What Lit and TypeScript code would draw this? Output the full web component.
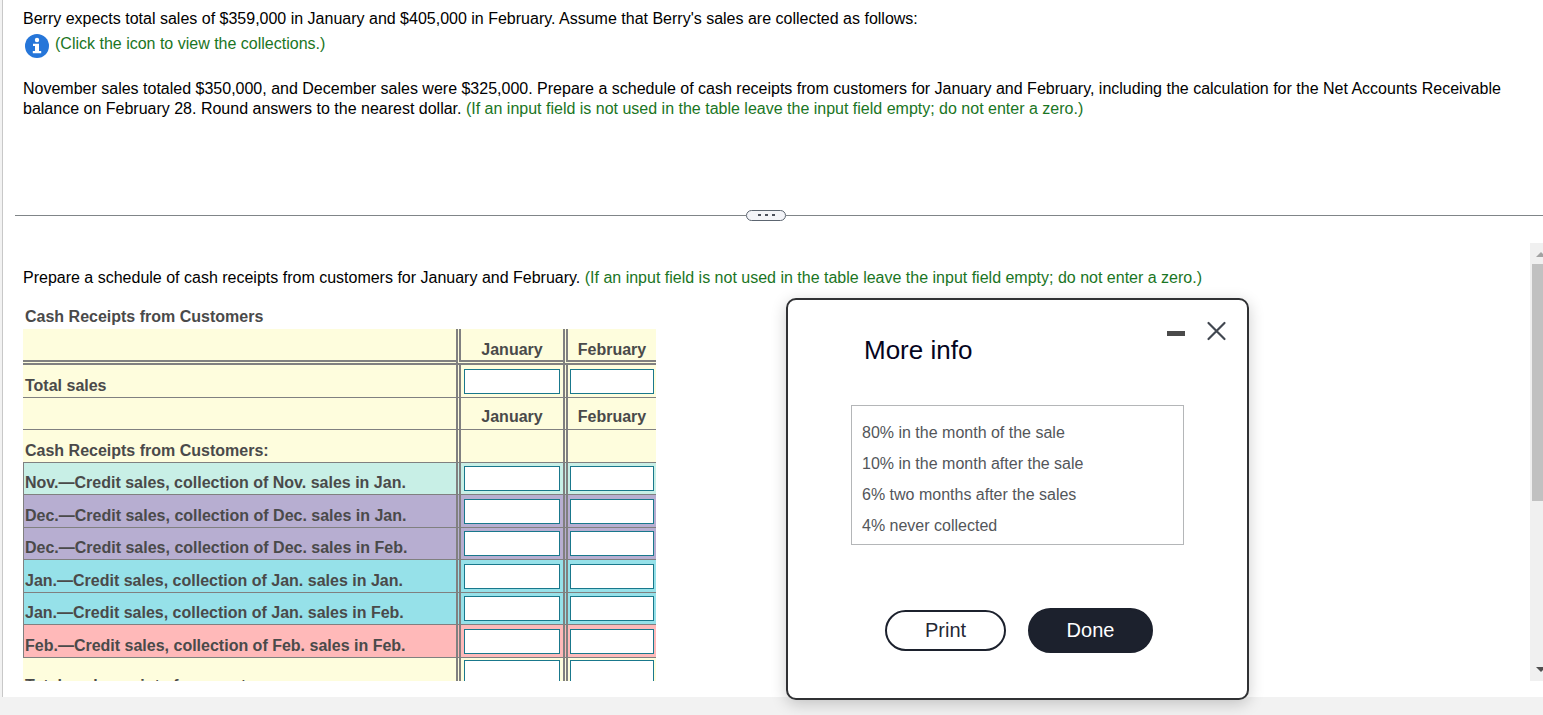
import { LitElement, html, css, svg, nothing } from "lit";
import { customElement } from "lit/decorators.js";
import { classMap } from "lit/directives/class-map.js";

type Row = { label: string; tone: string; kind: "input" | "heading" | "empty" };

const ROWS: Row[] = [
  { label: "Total sales", tone: "plain", kind: "input" },
  { label: "", tone: "plain", kind: "heading" },
  { label: "Cash Receipts from Customers:", tone: "plain", kind: "empty" },
  { label: "Nov.—Credit sales, collection of Nov. sales in Jan.", tone: "mint", kind: "input" },
  { label: "Dec.—Credit sales, collection of Dec. sales in Jan.", tone: "violet", kind: "input" },
  { label: "Dec.—Credit sales, collection of Dec. sales in Feb.", tone: "violet", kind: "input" },
  { label: "Jan.—Credit sales, collection of Jan. sales in Jan.", tone: "aqua", kind: "input" },
  { label: "Jan.—Credit sales, collection of Jan. sales in Feb.", tone: "aqua", kind: "input" },
  { label: "Feb.—Credit sales, collection of Feb. sales in Feb.", tone: "rose", kind: "input" },
  { label: "Total cash receipts from customers", tone: "plain", kind: "input" },
];

const MONTHS = ["January", "February"];

@customElement("receipts-table")
class ReceiptsTable extends LitElement {
  static styles = css`
    :host {
      display: block;
    }
    .grid {
      table-layout: fixed;
      width: 633px;
      border-collapse: separate;
      border-spacing: 0;
      font-weight: bold;
      color: #4a4a4a;
    }
    .name-col {
      width: 433px;
    }
    .jan-col {
      width: 107px;
    }
    .feb-col {
      width: 93px;
    }
    .caption {
      text-align: left;
      padding: 0 2px 2px;
    }
    th,
    td {
      box-sizing: border-box;
      padding: 0;
      border-bottom: 1px solid #808080;
    }
    .name {
      text-align: left;
      vertical-align: bottom;
      padding: 0 2px 1px;
      white-space: nowrap;
    }
    .month {
      border-left: 5px double #808080;
      text-align: center;
      vertical-align: bottom;
      padding-bottom: 2px;
    }
    .field {
      border-left: 5px double #808080;
      vertical-align: middle;
      padding: 0 3px;
    }
    .field + .field {
      padding: 0 2px;
    }
    .head {
      height: 36px;
    }
    .head th,
    .head td {
      border-bottom: 5px double #808080;
    }
    .head .month {
      padding-bottom: 0;
    }
    .row {
      height: 32px;
    }
    .row:nth-child(odd) {
      height: 33px;
    }
    .row:last-child {
      height: 40px;
    }
    .row:last-child .field {
      vertical-align: top;
      padding-top: 2px;
    }
    .plain {
      background: #fefddd;
    }
    .mint {
      background: #c8efe6;
    }
    .violet {
      background: #b7aed1;
    }
    .aqua {
      background: #96e1e9;
    }
    .rose {
      background: #ffb9b9;
    }
    .mint .name,
    .violet .name,
    .aqua .name,
    .rose .name {
      border-left: 1px solid #808080;
      padding-left: 1px;
    }
    input {
      display: block;
      box-sizing: border-box;
      width: 100%;
      height: 25px;
      margin: 0;
      padding: 0 4px;
      border: 1px solid #19788c;
      border-radius: 0;
      background: #fff;
      font: inherit;
      font-weight: normal;
      text-align: right;
    }
  `;

  private cells(row: Row) {
    return MONTHS.map((m) =>
      row.kind === "heading"
        ? html`<th class="month" scope="col">${m}</th>`
        : html`<td class="field">
            ${row.kind === "input"
              ? html`<input type="text" aria-label="${row.label}, ${m}" />`
              : nothing}
          </td>`
    );
  }

  render() {
    return html`
      <table class="grid">
        <caption class="caption">Cash Receipts from Customers</caption>
        <colgroup>
          <col class="name-col" />
          <col class="jan-col" />
          <col class="feb-col" />
        </colgroup>
        <thead>
          <tr class="head plain">
            <td class="name"></td>
            ${MONTHS.map((m) => html`<th class="month" scope="col">${m}</th>`)}
          </tr>
        </thead>
        <tbody>
          ${ROWS.map(
            (r) => html`<tr class=${classMap({ row: true, [r.tone]: true })}>
              <th class="name" scope="row">${r.label}</th>
              ${this.cells(r)}
            </tr>`
          )}
        </tbody>
      </table>
    `;
  }
}

@customElement("info-dialog")
class InfoDialog extends LitElement {
  static styles = css`
    :host {
      display: block;
    }
    .dialog {
      box-sizing: border-box;
      width: 463px;
      padding: 20px 20px 45px 63px;
      border: 2px solid #303134;
      border-radius: 10px;
      background: #fff;
      box-shadow: 0 4px 16px rgba(0, 0, 0, 0.2);
    }
    .top {
      display: flex;
      justify-content: space-between;
    }
    h2 {
      margin: 0;
      padding: 15px 0 0 13px;
      font-size: 26px;
      line-height: 30px;
      font-weight: normal;
      color: #05051e;
    }
    .tools {
      display: flex;
      align-items: flex-start;
      gap: 18px;
    }
    .tool {
      display: block;
      padding: 0;
      border: 0;
      background: none;
      width: 22px;
      height: 22px;
    }
    .tool svg {
      display: block;
    }
    .terms {
      list-style: none;
      margin: 40px 43px 0 0;
      padding: 11px 10px 3px;
      border: 1px solid #b4b6b8;
      color: #53565a;
    }
    .terms li {
      line-height: 31px;
    }
    .actions {
      display: flex;
      align-items: center;
      gap: 22px;
      padding: 63px 0 0 34px;
    }
    .pill {
      box-sizing: border-box;
      font-family: inherit;
      font-size: 20px;
      line-height: 24px;
      text-align: center;
      border: 2px solid #1c212d;
      border-radius: 24px;
      padding: 0 0 2px;
    }
    .print {
      width: 121px;
      height: 41px;
      background: #fff;
      color: #252835;
    }
    .done {
      width: 125px;
      height: 45px;
      background: #1c212d;
      color: #fff;
    }
  `;

  render() {
    return html`
      <section class="dialog" role="dialog" aria-labelledby="title">
        <div class="top">
          <h2 id="title">More info</h2>
          <div class="tools">
            <button class="tool" aria-label="Minimize">
              <svg width="22" height="22" viewBox="0 0 22 22">
                <path d="M2 13.5h18" stroke="#4a4a4a" stroke-width="5" />
              </svg>
            </button>
            <button class="tool" aria-label="Close">
              <svg width="22" height="22" viewBox="0 0 22 22">
                <path
                  d="M3.5 3l16 16M19.5 3l-16 16"
                  stroke="#414750"
                  stroke-width="2.2"
                  stroke-linecap="round"
                />
              </svg>
            </button>
          </div>
        </div>
        <ul class="terms">
          <li>80% in the month of the sale</li>
          <li>10% in the month after the sale</li>
          <li>6% two months after the sales</li>
          <li>4% never collected</li>
        </ul>
        <div class="actions">
          <button class="pill print">Print</button>
          <button class="pill done">Done</button>
        </div>
      </section>
    `;
  }
}

@customElement("app-root")
class AppRoot extends LitElement {
  static styles = css`
    :host {
      display: flex;
      box-sizing: border-box;
      position: relative;
      height: 100vh;
      padding: 0 0 18px 2px;
      overflow: hidden;
      background: #f2f2f2;
      font-family: "Liberation Sans", Arial, sans-serif;
      font-size: 16px;
      line-height: 20px;
      color: #000;
    }
    .panel {
      flex: 1;
      min-width: 0;
      display: flex;
      flex-direction: column;
      border-left: 1px solid #c8c8c8;
      background: #fff;
    }
    p {
      margin: 0;
    }
    .hint {
      color: #1a7524;
    }
    .problem {
      padding: 9px 12px 91px 20px;
    }
    .collections {
      display: flex;
      align-items: flex-start;
      gap: 6px;
      padding: 5px 0 21px 2px;
    }
    .info {
      display: block;
      height: 24px;
      padding: 0;
      border: 0;
      background: none;
    }
    .info svg {
      display: block;
    }
    .divider {
      display: flex;
      align-items: center;
      margin-left: 12px;
    }
    .line {
      flex: 1;
      height: 1px;
      background: #808588;
    }
    .line.before {
      flex: 731;
    }
    .line.after {
      flex: 757;
    }
    .handle {
      box-sizing: border-box;
      display: flex;
      align-items: center;
      justify-content: center;
      gap: 4px;
      width: 40px;
      height: 11px;
      padding: 0 0 1px;
      border: 1px solid #5c6570;
      border-radius: 6px;
      background: #f3f4f8;
    }
    .dot {
      width: 3px;
      height: 2px;
      background: #4b505a;
    }
    .work {
      flex: 1;
      min-height: 0;
      display: flex;
      margin: 22px 0 16px;
    }
    .answer {
      flex: 1;
      min-width: 0;
      padding: 25px 12px 0 20px;
      overflow: hidden;
    }
    .answer p {
      padding-bottom: 19px;
    }
    .scroll {
      box-sizing: border-box;
      width: 13px;
      display: flex;
      flex-direction: column;
      padding-left: 2px;
      background: #f0f0f0;
      overflow: hidden;
    }
    .scroll svg {
      display: block;
      flex: none;
    }
    .thumb {
      flex: 237;
      background: #c1c1c1;
    }
    .rest {
      flex: 159;
    }
    .floating {
      position: absolute;
      left: 786px;
      top: 298px;
    }
  `;

  private arrow(points: string, fill: string) {
    return html`<svg width="17" height="21" viewBox="0 0 17 21">
      ${svg`<polygon points=${points} fill=${fill} />`}
    </svg>`;
  }

  render() {
    return html`
      <main class="panel">
        <section class="problem">
          <p>
            Berry expects total sales of $359,000 in January and $405,000 in February. Assume that
            Berry's sales are collected as follows:
          </p>
          <div class="collections">
            <button class="info" aria-label="View the collections">
              <svg width="24" height="24" viewBox="0 0 24 24">
                <circle cx="12" cy="12" r="12" fill="#2676d9" />
                <circle cx="12" cy="6" r="2.2" fill="#fff" />
                <path d="M8 9.7h6v7.3h2.2v2.2H7.8V17H10v-5H8z" fill="#fff" />
              </svg>
            </button>
            <span class="hint">(Click the icon to view the collections.)</span>
          </div>
          <p>
            November sales totaled $350,000, and December sales were $325,000. Prepare a schedule of
            cash receipts from customers for January and February, including the calculation for the
            Net Accounts Receivable balance on February 28. Round answers to the nearest dollar.
            <span class="hint"
              >(If an input field is not used in the table leave the input field empty; do not enter
              a zero.)</span
            >
          </p>
        </section>
        <div class="divider">
          <span class="line before"></span>
          <button class="handle" aria-label="Resize panes">
            <span class="dot"></span><span class="dot"></span><span class="dot"></span>
          </button>
          <span class="line after"></span>
        </div>
        <div class="work">
          <section class="answer">
            <p>
              Prepare a schedule of cash receipts from customers for January and February.
              <span class="hint"
                >(If an input field is not used in the table leave the input field empty; do not
                enter a zero.)</span
              >
            </p>
            <receipts-table></receipts-table>
          </section>
          <div class="scroll">
            ${this.arrow("4,14 9,9 14,14", "#a3a3a3")}
            <div class="thumb"></div>
            <div class="rest"></div>
            ${this.arrow("4,7 9,12 14,7", "#505050")}
          </div>
        </div>
      </main>
      <info-dialog class="floating"></info-dialog>
    `;
  }
}
